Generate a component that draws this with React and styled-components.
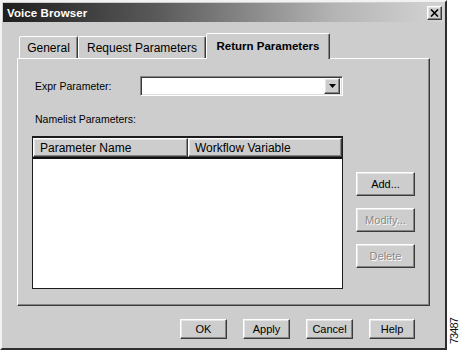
import React from 'react';
import styled, { createGlobalStyle, css } from 'styled-components';

const GlobalStyle = createGlobalStyle`
  html, body {
    margin: 0;
    padding: 0;
    background: #ffffff;
  }
  body {
    font-family: "Liberation Sans", Arial, sans-serif;
    color: #000;
  }
`;

const FACE = '#cdcdcd';

const raised = css`
  border: 1px solid;
  border-color: #ffffff #3a3a3a #3a3a3a #ffffff;
  box-shadow: inset -1px -1px #858585, inset 1px 1px #e6e6e6;
`;

const sunken = css`
  border: 1px solid;
  border-color: #858585 #ffffff #ffffff #858585;
  box-shadow: inset 1px 1px #3a3a3a, inset -1px -1px #dcdcdc;
`;

const Page = styled.div`
  display: flex;
  align-items: flex-start;
  width: 461px;
  height: 351px;
`;

const Window = styled.div`
  box-sizing: border-box;
  width: 447px;
  height: 350px;
  padding: 1px;
  background: ${FACE};
  border: 2px solid;
  border-color: #f2f2f2 #2e2e2e #2e2e2e #f2f2f2;
  display: flex;
  flex-direction: column;
`;

const TitleBar = styled.div`
  height: 19px;
  display: flex;
  align-items: center;
  justify-content: space-between;
  padding: 0 2px 0 4px;
  background: linear-gradient(to right, #1e1e1e 0%, #5a5a5a 35%, #b4b4b4 75%, #d4d4d4 100%);
`;

const Title = styled.span`
  color: #ffffff;
  font-weight: bold;
  font-size: 11.5px;
  letter-spacing: 0.1px;
`;

const CloseButton = styled.div`
  ${raised};
  box-sizing: border-box;
  width: 15px;
  height: 14px;
  background: ${FACE};
  display: flex;
  align-items: center;
  justify-content: center;
`;

const Body = styled.div`
  padding: 11px 14px 0 14px;
  display: flex;
  flex-direction: column;
`;

const TabRow = styled.div`
  display: flex;
  align-items: flex-end;
  height: 25px;
  padding-left: 2px;
`;

const Tab = styled.div`
  box-sizing: border-box;
  width: ${({ w }) => w}px;
  height: ${({ active }) => (active ? 26 : 22)}px;
  margin-bottom: ${({ active }) => (active ? -1 : 0)}px;
  position: relative;
  z-index: ${({ active }) => (active ? 1 : 0)};
  background: ${FACE};
  border: 1px solid;
  border-bottom: none;
  border-color: #ffffff #3a3a3a transparent #ffffff;
  border-radius: 2px 2px 0 0;
  box-shadow: inset -1px 0 #858585;
  display: flex;
  align-items: center;
  justify-content: center;
  padding-bottom: ${({ active }) => (active ? 2 : 0)}px;
  font-size: ${({ active }) => (active ? 11.5 : 12)}px;
  font-weight: ${({ active }) => (active ? 'bold' : 'normal')};
  white-space: nowrap;
`;

const Panel = styled.div`
  box-sizing: border-box;
  width: 413px;
  height: 248px;
  border: 1px solid;
  border-color: #ffffff #3a3a3a #3a3a3a #ffffff;
  box-shadow: inset -1px -1px #858585;
  padding: 17px 0 0 14px;
  display: flex;
  flex-direction: column;
`;

const ExprRow = styled.div`
  display: flex;
  align-items: center;
  padding-left: 3px;
`;

const Label = styled.div`
  font-size: 10.5px;
  line-height: 13px;
  width: ${({ w }) => (w ? `${w}px` : 'auto')};
  margin-top: ${({ mt }) => mt || 0}px;
  padding-left: ${({ pl }) => pl || 0}px;
`;

const Combo = styled.div`
  ${sunken};
  box-sizing: border-box;
  width: 203px;
  height: 20px;
  background: #ffffff;
  display: flex;
  justify-content: flex-end;
  align-items: center;
  padding-right: 2px;
`;

const DropButton = styled.div`
  ${raised};
  box-sizing: border-box;
  width: 16px;
  height: 16px;
  background: ${FACE};
  display: flex;
  align-items: center;
  justify-content: center;
`;

const ListRow = styled.div`
  display: flex;
  margin-top: 10px;
`;

const List = styled.div`
  box-sizing: border-box;
  width: 311px;
  height: 153px;
  background: #ffffff;
  border: 1px solid #1c1c1c;
  border-top-width: 2px;
  display: flex;
  flex-direction: column;
`;

const HeaderRow = styled.div`
  display: grid;
  grid-template-columns: 155px 1fr;
  height: 19px;
  border-bottom: 2px solid #111;
`;

const HeaderCell = styled.div`
  ${raised};
  box-sizing: border-box;
  background: ${FACE};
  font-size: 12px;
  display: flex;
  align-items: center;
  padding-left: 6px;
  white-space: nowrap;
`;

const SideButtons = styled.div`
  display: flex;
  flex-direction: column;
  gap: 12px;
  margin-left: 13px;
  padding-top: 36px;
`;

const Button = styled.div`
  ${raised};
  box-sizing: border-box;
  width: ${({ w }) => w}px;
  height: ${({ h }) => h}px;
  background: ${FACE};
  display: flex;
  align-items: center;
  justify-content: center;
  font-size: 11px;
  color: ${({ disabled }) => (disabled ? '#8a8a8a' : '#000')};
  text-shadow: ${({ disabled }) => (disabled ? '1px 1px #ffffff' : 'none')};
`;

const Footer = styled.div`
  display: flex;
  justify-content: flex-end;
  gap: 16px;
  margin-top: 13px;
  padding-right: 15px;
`;

const Side = styled.div`
  width: 14px;
  height: 350px;
  display: flex;
  align-items: flex-end;
  justify-content: center;
  padding-bottom: 6px;
  box-sizing: border-box;
`;

const FigureId = styled.span`
  writing-mode: vertical-rl;
  transform: rotate(180deg);
  font-size: 11px;
  letter-spacing: -0.9px;
  line-height: 11px;
  color: #111;
`;

const tabs = [
  { label: 'General', w: 59 },
  { label: 'Request Parameters', w: 128 },
  { label: 'Return Parameters', w: 124, active: true },
];

const App = () => (
  <Page>
    <GlobalStyle />
    <Window>
      <TitleBar>
        <Title>Voice Browser</Title>
        <CloseButton>
          <svg width="9" height="8" viewBox="0 0 9 8">
            <path d="M1 0.5 L8 7.5 M8 0.5 L1 7.5" stroke="#000" strokeWidth="1.6" />
          </svg>
        </CloseButton>
      </TitleBar>
      <Body>
        <TabRow>
          {tabs.map(t => (
            <Tab key={t.label} w={t.w} active={t.active}>
              {t.label}
            </Tab>
          ))}
        </TabRow>
        <Panel>
          <ExprRow>
            <Label w={105}>Expr Parameter:</Label>
            <Combo>
              <DropButton>
                <svg width="7" height="4" viewBox="0 0 7 4">
                  <path d="M0 0 H7 L3.5 4 Z" fill="#000" />
                </svg>
              </DropButton>
            </Combo>
          </ExprRow>
          <Label mt={17} pl={3}>Namelist Parameters:</Label>
          <ListRow>
            <List>
              <HeaderRow>
                <HeaderCell>Parameter Name</HeaderCell>
                <HeaderCell>Workflow Variable</HeaderCell>
              </HeaderRow>
            </List>
            <SideButtons>
              <Button w={59} h={24}>Add...</Button>
              <Button w={59} h={24} disabled>Modify...</Button>
              <Button w={59} h={24} disabled>Delete</Button>
            </SideButtons>
          </ListRow>
        </Panel>
        <Footer>
          <Button w={47} h={20}>OK</Button>
          <Button w={47} h={20}>Apply</Button>
          <Button w={47} h={20}>Cancel</Button>
          <Button w={46} h={20}>Help</Button>
        </Footer>
      </Body>
    </Window>
    <Side>
      <FigureId>73487</FigureId>
    </Side>
  </Page>
);

export default App;
